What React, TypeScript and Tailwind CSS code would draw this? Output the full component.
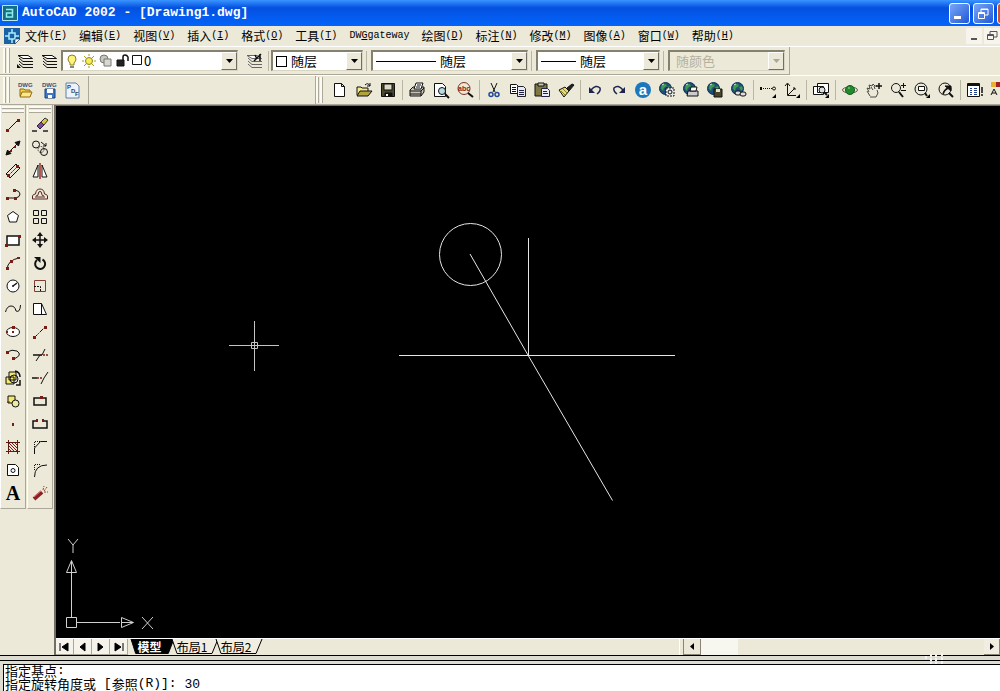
import { useState } from 'react'
import type { ReactNode } from 'react'
import clsx from 'clsx'

const CJK = "font-['Noto_Sans_CJK_SC',sans-serif]"
const MONO = "font-['Liberation_Mono',monospace]"

// ── Data ──────────────────────────────────────────────────────────────────────

const MENUS = [
  ['文件', 'F'],
  ['编辑', 'E'],
  ['视图', 'V'],
  ['插入', 'I'],
  ['格式', 'O'],
  ['工具', 'T'],
  ['DWGgateway', ''],
  ['绘图', 'D'],
  ['标注', 'N'],
  ['修改', 'M'],
  ['图像', 'A'],
  ['窗口', 'W'],
  ['帮助', 'H'],
]

type Tool = { name: string; icon: ReactNode }

// ── Shared icon parts ─────────────────────────────────────────────────────────

const globe = (
  <>
    <circle cx="6.5" cy="6.5" r="6" fill="#1b4d86" stroke="#12304f" />
    <path d="M2 4q3-3 5-2l1 2-3 2-1 3-2-2zM8 5l3-1 1 3-2 2z" fill="#3f9a52" stroke="#2a6b45" strokeWidth=".5" />
    <path d="M3 3l2-1" stroke="#cfe6f5" />
  </>
)
const dot = '#7a1c14'
const corner = <path d="M16 12v4h-4z" fill="#000" stroke="none" />

const drawTools: Tool[] = [
  { name: '直线', icon: <><path d="M3 13L13 3" /><path d="M1 12h3v3H1zM12 2h3v3h-3z" fill={dot} stroke="none" /></> },
  { name: '构造线', icon: <><path d="M2 14L14 2" /><path d="M1 15l1.500-5 3.500 3.500zM15 1l-5 1.500 3.500 3.500z" fill="#111" /><path d="M5 10h2v2H5zM9 6h2v2H9z" fill={dot} stroke="none" /></> },
  { name: '多线', icon: <><path d="M1 11L11 1l4 4L5 15z" /><path d="M4 12l8-8" strokeDasharray="2 1" /><path d="M2 11h3v3H2zM11 2h3v3h-3z" fill={dot} stroke="none" /></> },
  { name: '多段线', icon: <><path d="M2 12h9q4-1 4-4t-5-4" /><path d="M1 11h3v3H1zM9 11h3v3H9zM8 3h3v3H8z" fill={dot} stroke="none" /></> },
  { name: '正多边形', icon: <path d="M8 2.500l5.500 4-2 6.500h-7l-2-6.500z" fill="#fff" /> },
  { name: '矩形', icon: <><path d="M2 4h12v9H2z" fill="#fff" strokeWidth="1.500" /><path d="M0 12h3v3H0zM13 3h3v3h-3z" fill={dot} stroke="none" /></> },
  { name: '圆弧', icon: <><path d="M2 14q1-9 12-11" /><path d="M1 12h3v3H1zM5 5h3v3H5zM12 2h3v2h-3z" fill={dot} stroke="none" /></> },
  { name: '圆', icon: <><circle cx="8" cy="8" r="6" fill="#fff" /><path d="M8 8l4-3M7 8h2" strokeWidth="1.500" /></> },
  { name: '样条曲线', icon: <path d="M.5 11Q2 5 6 5t5 5q4 2 4.500-6" /> },
  { name: '椭圆', icon: <><ellipse cx="8" cy="8" rx="6.500" ry="4.500" fill="#fff" /><path d="M7 2h3v3H7zM1 7h2v2H1zM7 7h2v2H7z" fill={dot} stroke="none" /></> },
  { name: '椭圆弧', icon: <><path d="M2 5q5-3 10-1 6 4-3 8" /><path d="M1 4h3v3H1zM7 10h3v3H7z" fill={dot} stroke="none" /></> },
  { name: '插入块', icon: <><path d="M4 2h7v8H4zM1 7h8v7H1z" fill="#f1e873" /><circle cx="9" cy="9" r="4" /><path d="M10 1q5 1 5 6M15 10v5h-4" strokeWidth="1.500" /></> },
  { name: '创建块', icon: <><path d="M3 3h7v7H3z" fill="#f1e873" /><circle cx="10.500" cy="10.500" r="3.500" fill="#efeaa0" /><path d="M2 9h3" stroke={dot} /></> },
  { name: '点', icon: <path d="M7 7h2v3H7z" fill={dot} stroke="none" /> },
  { name: '图案填充', icon: <><path d="M3.500 1v14M12.500 1v14M1 3.500h14M1 12.500h14" stroke="#5b1b16" /><path d="M4 4l8 8M4 7l5 5M7 4l5 5M4 10l2 2M10 4l2 2" stroke={dot} /></> },
  { name: '面域', icon: <><path d="M2.500 2.500h8l3 3v8h-11z" fill="#fff" /><circle cx="8" cy="8.500" r="2" /></> },
  { name: '多行文字', icon: null },
]

const modifyTools: Tool[] = [
  { name: '删除', icon: <><path d="M0 14h16" stroke="#222" strokeDasharray="5 6" strokeWidth="1.500" /><path d="M5 9l4-4 3 3-4 4z" fill="#7c4b9b" stroke="#32203e" /><path d="M9 5l4-4 3 2-4 5z" fill="#d8c84a" stroke="#333" /></> },
  { name: '复制', icon: <><circle cx="4" cy="4.500" r="3.500" /><circle cx="12" cy="12" r="3.500" /><circle cx="9" cy="9.500" r="3" strokeDasharray="1 1" /><path d="M9 2l5 4M14 3v3h-3" /></> },
  { name: '镜像', icon: <><path d="M6 2v12H1zM10 2v12h5z" fill="#fff" /><path d="M8 0v16" stroke="#a32626" strokeWidth="1.500" /></> },
  { name: '偏移', icon: <><path d="M.5 13v-3q.5-2 3-2Q4 3 8 3t4.500 5q2.500 0 3 2v3z" stroke="#5a2622" /><path d="M3 11h10M4 10q2.500 0 2.500-3 0-1.500 1.500-1.500t1.500 1.500q0 3 2.500 3" stroke="#5a2622" /></> },
  { name: '阵列', icon: <path d="M1.500 1.500h5v5h-5zM9.500 1.500h5v5h-5zM1.500 9.500h5v5h-5zM9.500 9.500h5v5h-5z" /> },
  { name: '移动', icon: <><path d="M8 2v12M2 8h12" strokeWidth="1.500" /><path d="M8 0l3 4H5zM8 16l3-4H5zM0 8l4-3v6zM16 8l-4-3v6z" fill="#111" stroke="none" /></> },
  { name: '旋转', icon: <><path d="M10.500 4.500A5 5 0 1 1 5 5" strokeWidth="2" /><path d="M2 2h6.500v6z" fill="#111" stroke="none" /></> },
  { name: '缩放', icon: <><path d="M2.500 2.500h11v11h-11z" stroke="#823c34" /><path d="M2 8.500h6.500V14" strokeDasharray="2 1" /></> },
  { name: '拉伸', icon: <><path d="M1.500 2.500h8l5 11h-13z" fill="#fff" /><path d="M9.500 2.500v11" /></> },
  { name: '拉长', icon: <><path d="M2 14L14 2" strokeDasharray="5 1 1 1" /><path d="M1 12h3v3H1zM12 2h3v3h-3z" fill={dot} stroke="none" /></> },
  { name: '修剪', icon: <><path d="M1 8h7" strokeWidth="1.500" /><path d="M8 8h8" stroke={dot} strokeWidth="1.500" strokeDasharray="2 1" /><path d="M4 14l4-6h2l3-6" /></> },
  { name: '延伸', icon: <><path d="M0 8h5" strokeWidth="1.500" /><path d="M5 8h6" stroke={dot} strokeWidth="1.500" strokeDasharray="2 1" /><path d="M9 14l3-6 4-6" /></> },
  { name: '打断于点', icon: <><path d="M2 5h12v7H2z" strokeWidth="1.500" /><path d="M8 3h3v3H8z" fill={dot} stroke="none" /></> },
  { name: '打断', icon: <><path d="M5 5H1v7h14V5h-4" strokeWidth="1.500" /><path d="M4 3h2v3H4zM10 3h2v3h-2z" fill={dot} stroke="none" /></> },
  { name: '倒角', icon: <><path d="M2.500 15V9l6-6.500H15" /><path d="M2.500 8V2.500h6" strokeDasharray="1 1" /></> },
  { name: '圆角', icon: <><path d="M2.500 15q0-12 12.500-12" /><path d="M2.500 8V2.500h6" strokeDasharray="1 1" /></> },
  { name: '分解', icon: <><path d="M2 14l8-7" stroke="#8c1f22" strokeWidth="4" /><path d="M2 12l7-6" stroke="#d8797b" /><path d="M11 5l1-4M12 6l3-4M12 7h4" stroke="#8f4b2c" strokeDasharray="2 1" /></> },
]

const standardGroups: Tool[][] = [
  [
    { name: '新建', icon: <path d="M2.500 1.500h7l3 3v10h-10zM9.500 1.500v3h3" fill="#fff" /> },
    { name: '打开', icon: <><path d="M1 13V5h4l1 1h6v3" fill="#f5e98a" /><path d="M1 14l3-5h12l-4 5z" fill="#b0a43b" /><path d="M9 3q3-3 5 1M14 1v3h-3" /></> },
    { name: '保存', icon: <><path d="M1.500 1.500h13v13h-13z" fill="#48482e" /><path d="M4 2h8v6H4z" fill="#dcd9c4" /><path d="M5 11h7v3H5z" fill="#111" /><path d="M6 12h2v2H6z" fill="#fff" stroke="none" /></> },
  ],
  [
    { name: '打印', icon: <><path d="M1 8l3-3h11v5l-3 4H1z" fill="#c5c2b4" /><path d="M5 7l2-6h7l-2 6z" fill="#fff" /><path d="M8 3h4M7 5h4M1 9h11l3-3M1 12h11M12 9v5" /></> },
    { name: '打印预览', icon: <><path d="M1.500 1.500h8l3 3v10h-11z" fill="#fff" /><circle cx="9" cy="9" r="3.500" fill="#b7dbe5" /><path d="M12 12l4 4" strokeWidth="2" /></> },
    { name: '查找', icon: <><circle cx="7" cy="6.500" r="6" stroke="#733" /><text x="1" y="9" fontSize="7" fontWeight="700" fill="#8b1b1b" stroke="none" fontFamily="Liberation Sans">abc</text><path d="M11 11l5 4" strokeWidth="2" /></> },
  ],
  [
    { name: '剪切', icon: <><path d="M5 1l4 9M11 1L7 10" /><circle cx="5" cy="12.500" r="2" stroke="#234a9a" strokeWidth="1.500" /><circle cx="11" cy="12.500" r="2" stroke="#234a9a" strokeWidth="1.500" /></> },
    { name: '复制', icon: <><path d="M.5 2.500h6l2 2v7h-8z" fill="#fff" /><path d="M2 5.500h4M2 7.500h4M2 9.500h4" /><path d="M7.500 4.500h6l2 2v8h-8z" fill="#e8e8f2" stroke="#223" /><path d="M9 8.500h5M9 10.500h5M9 12.500h5" stroke="#224" /></> },
    { name: '粘贴', icon: <><path d="M1 2h12v12H1z" fill="#7f7840" /><path d="M4 1h6v3H4z" fill="#c8c6b8" /><path d="M7.500 6.500h6l2 2v6h-8z" fill="#e9edf5" stroke="#224" /><path d="M9 9.500h4M9 11.500h5" stroke="#224" /></> },
    { name: '特性匹配', icon: <><path d="M1 8l6-3 4 4-5 6z" fill="#e5db77" /><path d="M3 9l4 4M5 7l4 4" stroke="#8a7f2f" /><path d="M9 6l5-4 2 1-5 6z" fill="#222" /></> },
  ],
  [
    { name: '放弃', icon: <><path d="M4 8q5-6 9-2 1 3-3 6" stroke="#1d2450" strokeWidth="1.500" /><path d="M2 5v6h6z" fill="#1d2450" stroke="none" /></> },
    { name: '重做', icon: <><path d="M12 8Q7 2 3 6q-1 3 3 6" stroke="#1d2450" strokeWidth="1.500" /><path d="M14 5v6H8z" fill="#1d2450" stroke="none" /></> },
    { name: '今日', icon: <><circle cx="8" cy="8" r="8" fill="#1b78bd" stroke="none" /><text x="8" y="13" textAnchor="middle" fontSize="15" fontWeight="700" fill="#fff" stroke="none" fontFamily="Liberation Sans">a</text></> },
    { name: '网上发布', icon: <>{globe}<path d="M7 6h8v8H7z" fill="#e6e8ee" strokeDasharray="2 1" /><circle cx="11" cy="10" r="2" /></> },
    { name: '电子传递', icon: <>{globe}<path d="M5 9h10v5H4z" fill="#ccc" /><path d="M7 9l1-4h6l-1 4z" fill="#fff" /></> },
    { name: '保存到网上', icon: <>{globe}<path d="M7 7h8v8H7z" fill="#47452c" /><path d="M9 7h4v3H9z" fill="#e6e1c4" stroke="none" /></> },
    { name: '超级链接', icon: <>{globe}<rect x="4" y="9" width="6" height="4" rx="2" fill="#ddd" /><rect x="9" y="10" width="6" height="4" rx="2" fill="#ddd" /></> },
  ],
  [
    { name: '临时追踪点', icon: <><path d="M1 6.500h11" strokeDasharray="1 1" /><path d="M0 5h2v3H0z" fill="#111" stroke="none" /><circle cx="14" cy="6.500" r="1.500" />{corner}</> },
    { name: '用户坐标系', icon: <><path d="M3.500 2v11.500H12M4 13l7-7" /><path d="M1 4l2.500-3L6 4M9 6h2v2" />{corner}</> },
  ],
  [
    { name: '命名视图', icon: <><path d="M4.500 1.500h11v9h-11zM.5 4.500h10v8H.5z" fill="#fff" /><circle cx="9" cy="8" r="3" fill="#ddd" /><path d="M11 10l3 3" strokeWidth="2" />{corner}</> },
  ],
  [
    { name: '三维动态观察', icon: <><ellipse cx="8" cy="8" rx="7.500" ry="3" stroke="#5c5b52" /><circle cx="8" cy="8" r="4.500" fill="#238a2b" stroke="#145c1b" /><path d="M6 6h2" stroke="#9be39f" /></> },
    { name: '实时平移', icon: <><path d="M4 14l-3-5M3 10L1 6l3 1-1-4 3 1 1-2 2 2h2M5 5l2 3M8 4l1 3M11 8l1 3-2 4H4" stroke="#4a4a42" /><path d="M13 1v6M10 4h6" strokeWidth="1.500" /></> },
    { name: '实时缩放', icon: <><circle cx="6" cy="6" r="4.500" /><path d="M9 10l4 5" strokeWidth="2" /><path d="M11 3.500h5M13.500 1v5M11 8.500h5" /></> },
    { name: '窗口缩放', icon: <><circle cx="7" cy="7" r="6" /><path d="M4.500 4.500h6v4h-6z" fill="#fff" /><path d="M11 11l2 3" strokeWidth="2" />{corner}</> },
    { name: '缩放上一个', icon: <><circle cx="7" cy="7" r="6" /><path d="M11 11l4 4" strokeWidth="2" /><path d="M5 12q1-4 5-6" strokeWidth="1.500" /><path d="M7 4h6v5z" fill="#111" /></> },
  ],
  [
    { name: '设计中心', icon: <><path d="M.5 1.500h12v13H.5z" fill="#fff" /><path d="M.5 3h12" strokeWidth="2" /><path d="M3 6.500h2M3 8.500h2M3 10.500h2M3 12.500h2M7 6.500h3M7 8.500h3M7 10.500h3M7 12.500h3" stroke="#223e8a" /><path d="M15 5v6M14 13h2" strokeWidth="1.500" /></> },
    { name: '特性', icon: <><path d="M0 0h5v5H0z" fill="#e7b22e" stroke="none" /><path d="M5 0h5v5H5z" fill="#a12020" stroke="none" /><path d="M0 13l3-6 3 6M1 11h4" /></> },
  ],
]

const gatewayTools: Tool[] = [
  { name: '打开 DWG', icon: <><text x="1" y="5" fontSize="6" fill="#36517c" stroke="none" fontFamily="Liberation Sans" fontWeight="700">DWG</text><path d="M3 14V7h4l1 1h5v2" fill="#f6cf4b" stroke="#8d6a14" /><path d="M3 15l2-5h10l-2 5z" fill="#ffe888" stroke="#8d6a14" /></> },
  { name: '保存 DWG', icon: <><text x="1" y="5" fontSize="6" fill="#36517c" stroke="none" fontFamily="Liberation Sans" fontWeight="700">DWG</text><path d="M4 7h10v9H4z" fill="#3f78c8" stroke="#174177" /><path d="M6 7h6v4H6zM7 13h4v3H7z" fill="#fff" stroke="none" /></> },
  { name: '输出 PDF', icon: <><path d="M1 1h10l3 3v12H1z" fill="#eef3fb" stroke="#5f7fa8" /><text x="2" y="7" fontSize="6" fontWeight="700" fill="#345" stroke="none" fontFamily="Liberation Sans">P</text><text x="6" y="11" fontSize="6" fontWeight="700" fill="#345" stroke="none" fontFamily="Liberation Sans">D</text><text x="10" y="14" fontSize="6" fontWeight="700" fill="#345" stroke="none" fontFamily="Liberation Sans">F</text></> },
]

const layersIcon = (
  <>
    <path d="M2 11l4 3.500h10M2 8l4 3.500h10M2 5l4 3.500h10" />
    <path d="M1 2.500h10l4.500 3H6z" fill="#fff" />
  </>
)

// ── Building blocks ───────────────────────────────────────────────────────────

function Icon({ children }: { children: ReactNode }) {
  return (
    <svg className="h-4 w-4 shrink-0 overflow-visible" viewBox="0 0 16 16" fill="none" stroke="#111" strokeWidth={1} aria-hidden="true">
      {children}
    </svg>
  )
}

function ToolButton({ tool }: { tool: Tool }) {
  return (
    <button type="button" aria-label={tool.name} title={tool.name} className="flex h-[23px] w-6 shrink-0 items-center justify-center">
      {tool.icon ? <Icon>{tool.icon}</Icon> : <span className="font-['Liberation_Serif',serif] text-xl leading-none font-bold">A</span>}
    </button>
  )
}

function Grip() {
  return (
    <div className="flex h-full shrink-0 gap-px py-px">
      <span className="w-[3px] border-r border-[#aca899] bg-[#fbfaf3]" />
      <span className="w-[3px] border-r border-[#aca899] bg-[#fbfaf3]" />
    </div>
  )
}

function Divider({ wide }: { wide?: boolean }) {
  return <span className={clsx('h-5 w-px shrink-0 bg-[#bab6a4]', wide ? 'mr-1 ml-[3px]' : 'mx-0.5')} />
}

type ComboProps = {
  label: string
  value: string
  width: string
  pad: string
  disabled?: boolean
  children?: ReactNode
}

function Combo({ label, value, width, pad, disabled, children }: ComboProps) {
  return (
    <div className={clsx('grid h-[21px] shrink-0 border-t-2 border-l-2 border-r border-b border-t-[#85816f] border-l-[#85816f] border-r-[#d9d5c3] border-b-[#d9d5c3]', disabled ? 'bg-[#ece9d8]' : 'bg-white', width)}>
      <select
        aria-label={label}
        disabled={disabled}
        defaultValue={value}
        className={clsx('col-start-1 row-start-1 w-full appearance-none bg-transparent text-[13px] leading-[18px] outline-none', CJK, pad, disabled ? 'text-[#b5b19f] opacity-100' : 'text-black')}
      >
        <option>{value}</option>
      </select>
      <div className="pointer-events-none col-start-1 row-start-1 flex items-center">
        {children}
        <span className="ml-auto flex h-full w-4 items-center justify-center border-t border-l border-r border-b border-t-white border-l-white border-r-[#716f64] border-b-[#716f64] bg-[#ece9d8]">
          <svg className="h-1 w-[7px]" viewBox="0 0 7 4" aria-hidden="true">
            <path d="M0 0h7L3.500 4z" fill={disabled ? '#aca899' : '#000'} />
          </svg>
        </span>
      </div>
    </div>
  )
}

function ToolColumn({ tools, label }: { tools: Tool[]; label: string }) {
  return (
    <div role="toolbar" aria-label={label} className="flex w-[26px] flex-col items-center self-start border-r border-b border-[#aca899] border-l border-l-white pt-px pb-1">
      <div className="flex h-[7px] w-[22px] flex-col gap-px">
        <span className="h-[3px] border-b border-[#aca899] bg-[#fbfaf3]" />
        <span className="h-[3px] border-b border-[#aca899] bg-[#fbfaf3]" />
      </div>
      {tools.map(t => <ToolButton key={t.name} tool={t} />)}
    </div>
  )
}

// ── Bars ──────────────────────────────────────────────────────────────────────

function TitleBar() {
  return (
    <header className="flex h-[26px] shrink-0 items-center bg-linear-to-b from-[#3a94ff] via-[#0551e0] via-30% to-[#0364fa] pl-0.5 text-white">
      <svg className="h-4 w-4" viewBox="0 0 16 16" fill="none" aria-hidden="true">
        <path d="M.5.5h15v15H.5z" fill="#176e83" stroke="#b8e8ec" />
        <path d="M4 4.500h6.500V12H4.500V8h6" stroke="#8bf0ed" strokeWidth="1.500" />
      </svg>
      <h1 className={clsx('ml-1 text-[13px] font-bold whitespace-pre', MONO)}>AutoCAD 2002 - [Drawing1.dwg]</h1>
      <div className="-mr-[18px] ml-auto flex gap-[3px]">
        <button type="button" aria-label="最小化" className="h-[21px] w-[21px] rounded-[3px] border border-white bg-linear-to-br from-[#7ba6f5] to-[#2056d8]">
          <svg viewBox="0 0 19 19" aria-hidden="true"><path d="M4 12h7v3H4z" fill="#fff" /></svg>
        </button>
        <button type="button" aria-label="还原" className="h-[21px] w-[21px] rounded-[3px] border border-white bg-linear-to-br from-[#7ba6f5] to-[#2056d8]">
          <svg viewBox="0 0 19 19" fill="none" stroke="#fff" aria-hidden="true"><path d="M7 8V5h7v6h-3M7 5.500h7M4.500 8.500h6v6h-6zM4 9.500h7" /></svg>
        </button>
        <button type="button" aria-label="关闭" className="h-[21px] w-[21px] rounded-[3px] border border-white bg-[#d9512c]" />
      </div>
    </header>
  )
}

function MenuBar() {
  return (
    <nav className="flex h-5 shrink-0 items-center overflow-hidden pl-1">
      <svg className="h-4 w-4 shrink-0" viewBox="0 0 16 16" fill="none" aria-hidden="true">
        <path d="M0 0h16v11l-5 5H0z" fill="#1b62a5" />
        <path d="M5 5h6v6H5zM8 1v4M8 11v4M1 8h4M11 8h4" stroke="#a9ecff" strokeWidth="1.500" />
        <path d="M11 16v-5h5z" fill="#fff" stroke="#111" strokeWidth=".5" />
      </svg>
      <div className="ml-[5px] flex gap-3">
        {MENUS.map(([text, key]) => (
          <button key={text} type="button" className="flex items-center text-xs leading-5 whitespace-nowrap">
            {key ? (
              <>
                <span className={CJK}>{text}</span>
                <span className={clsx('text-[10px]', MONO)}>(<u>{key}</u>)</span>
              </>
            ) : (
              <span className={clsx('text-[10px]', MONO)}>DW<u>G</u>gateway</span>
            )}
          </button>
        ))}
      </div>
      <div className="ml-auto flex shrink-0 gap-0.5">
        <button type="button" aria-label="最小化图形" className="h-4 w-4 bg-[#f6f4ec]">
          <svg viewBox="0 0 16 16" aria-hidden="true"><path d="M5 10h6v2H5z" fill="#555" /></svg>
        </button>
        <button type="button" aria-label="还原图形" className="h-4 w-4 bg-[#f6f4ec]">
          <svg viewBox="0 0 16 16" fill="none" stroke="#555" aria-hidden="true"><path d="M6 6V3.500h7V9h-3M3.500 6.500h6v5h-6zM4 7.500h5" /></svg>
        </button>
      </div>
    </nav>
  )
}

function PropertiesBar() {
  return (
    <div className="flex h-[29px] shrink-0 border-t border-white">
      <div role="toolbar" aria-label="对象特性" className="flex items-center border-r border-b border-[#aca899] pr-1 pl-[3px]">
        <Grip />
        <div className="ml-[3px] flex">
          <ToolButton tool={{ name: '将对象的图层置为当前', icon: <>{layersIcon}<path d="M0 11l4 4H0z" fill="#111" stroke="none" /></> }} />
          <ToolButton tool={{ name: '图层', icon: layersIcon }} />
        </div>
        <Combo label="图层" value="0" width="w-[177px]" pad="pl-[81px]">
          <span className="flex gap-px pl-px">
            <Icon><path d="M8 2q4 0 4 4 0 2-2 4v2H6v-2Q4 8 4 6q0-4 4-4z" fill="#fbf37c" stroke="#8a8223" /><path d="M6 14h4" /></Icon>
            <Icon><circle cx="8" cy="8" r="3.500" fill="#f7ee55" stroke="#8f8416" /><path d="M3 3l2 2M13 3l-2 2M3 13l2-2M13 13l-2-2M8 1v2M8 13v2M1 8h2M13 8h2" stroke="#a89b19" /></Icon>
            <Icon><circle cx="6" cy="6" r="4" fill="#c9c7bd" stroke="#777" /><path d="M6 6h7v7H6z" fill="#d8d8d0" stroke="#777" /></Icon>
            <Icon><path d="M2 7h7v6H2z" fill="#222" /><path d="M8 7V4q0-2 2-2t3 2v4" strokeWidth="1.500" /></Icon>
            <Icon><path d="M.5 2.500h9v9H.5z" /></Icon>
          </span>
        </Combo>
        <div className="ml-1 flex items-center">
          <ToolButton tool={{ name: '上一个图层', icon: <g stroke="#666">{layersIcon}<path d="M8 8l7-7M14 8V1M9 2l2 4" stroke="#111" strokeWidth="1.500" /></g> }} />
          <Divider />
        </div>
        <Combo label="颜色" value="随层" width="w-[92px]" pad="pl-[18px]">
          <span className="ml-[3px] h-[11px] w-[11px] border border-black" />
        </Combo>
        <Divider wide />
        <Combo label="线型" value="随层" width="w-[157px]" pad="pl-[67px]">
          <span className="ml-[3px] h-px w-[60px] bg-black" />
        </Combo>
        <Divider wide />
        <Combo label="线宽" value="随层" width="w-[124px]" pad="pl-[42px]">
          <span className="ml-[3px] h-px w-[35px] bg-black" />
        </Combo>
        <Divider wide />
        <Combo label="打印样式" value="随颜色" width="w-[117px]" pad="pl-1.5" disabled />
      </div>
    </div>
  )
}

function StandardBar() {
  return (
    <div className="flex h-[29px] shrink-0 overflow-hidden border-t border-white">
      <div role="toolbar" aria-label="DWGgateway" className="flex w-[89px] shrink-0 items-center border-r border-[#aca899] pl-[3px]">
        <Grip />
        <div className="ml-[3px] flex">{gatewayTools.map(t => <ToolButton key={t.name} tool={t} />)}</div>
      </div>
      <div role="toolbar" aria-label="标准" className="ml-[226px] flex shrink-0 items-center border-l border-[#aca899]">
        <Grip />
        <div className="ml-[5px] flex items-center">
          {standardGroups.map((group, i) => (
            <div key={group[0].name} className="flex items-center">
              {i > 0 && <Divider />}
              {group.map(t => <ToolButton key={t.name} tool={t} />)}
            </div>
          ))}
        </div>
      </div>
    </div>
  )
}

// ── Drawing area ──────────────────────────────────────────────────────────────

function Drawing() {
  return (
    <div className="relative min-h-0 flex-1 overflow-hidden bg-black">
      <svg className="block h-full w-full" fill="none" stroke="#e6e6e6" aria-label="Drawing1.dwg">
        <circle cx="414.500" cy="148.500" r="31" />
        <path d="M414 148l58.500 102 84 144.500M343 249.500h276M472.500 132v118" />
        <path d="M173 239.500h50M198.500 215v50M195.500 236.500h6v6h-6z" stroke="#c4c4c4" />
      </svg>
      <svg className="absolute bottom-0 left-0 h-28 w-28" viewBox="0 0 112 112" fill="none" stroke="#d0d0d0" aria-label="UCS">
        <path d="M10.500 91.500h10v10h-10zM15.500 91V43M21 96.500h43" />
        <path d="M15.500 34.500l5 12h-10zM77.500 96.500l-12 -5v10zM15.500 35v11M77 96.500H66" />
        <path d="M12 13l5 6 5-6M17 19v8M86 91l11 12M97 91L86 103" />
      </svg>
    </div>
  )
}

const TABS = [
  { name: '模型', width: 'w-[41px]' },
  { name: '布局1', width: 'w-11' },
  { name: '布局2', width: 'w-11' },
]

const NAV = [
  { name: '第一个', d: 'M4 3v8M12 3v8L6 7z' },
  { name: '上一个', d: 'M11 3v8L6 7z' },
  { name: '下一个', d: 'M6 3v8l5-4z' },
  { name: '最后一个', d: 'M5 3v8l6-4zM13 3v8' },
]

function LayoutBar() {
  const [active, setActive] = useState('模型')

  return (
    <div className="flex h-[17px] shrink-0 border-t border-white">
      <div className="flex">
        {NAV.map(n => (
          <button key={n.name} type="button" aria-label={n.name} className="w-[18px] border-r border-b border-[#aca899] bg-[#f5f3ea]">
            <svg className="h-[14px] w-4" viewBox="0 0 16 14" fill="#000" stroke="#000" aria-hidden="true"><path d={n.d} /></svg>
          </button>
        ))}
      </div>
      <div role="tablist" className="ml-[3px] flex">
        {TABS.map(tab => (
          <button
            key={tab.name}
            type="button"
            role="tab"
            aria-selected={active === tab.name}
            onClick={() => setActive(tab.name)}
            className={clsx('relative h-[15px] pr-1 text-xs leading-[14px] whitespace-nowrap', CJK, tab.width, active === tab.name && 'font-bold text-white')}
          >
            <svg className="absolute inset-0 h-full w-full overflow-visible" viewBox="0 0 44 15" preserveAspectRatio="none" fill={active === tab.name ? '#000' : '#f1eee1'} stroke="#000" aria-hidden="true">
              <path d="M0 0l5 14.500h35L46 0" />
            </svg>
            <span className="relative">{tab.name}</span>
          </button>
        ))}
      </div>
      <div className="ml-auto flex w-[34%] border-l border-white pl-[3px]">
        <button type="button" aria-label="向左滚动" className="w-[18px] border-r border-b border-l border-[#8a8676] bg-[#ece9d8]">
          <svg className="mx-auto h-[13px] w-3" viewBox="0 0 12 13" aria-hidden="true"><path d="M8 3v7L4 6.500z" /></svg>
        </button>
        <div className="flex-1 bg-[#ece9d8]"><div className="h-full w-[37px] bg-[#f8f7ef]" /></div>
        <button type="button" aria-label="向右滚动" className="w-4 border-r border-b border-[#8a8676] bg-[#f1eee1]">
          <svg className="mx-auto h-[13px] w-3" viewBox="0 0 12 13" aria-hidden="true"><path d="M4 3v7l4-3.500z" /></svg>
        </button>
      </div>
    </div>
  )
}

function CommandLine() {
  const [value, setValue] = useState('30')

  return (
    <footer className="shrink-0 border-t border-black bg-[#dedbd0]">
      <div className="relative h-[5px] border-b border-black">
        <svg className="absolute -top-1 right-14 h-3 w-5" viewBox="0 0 20 12" stroke="#f4f4f4" strokeWidth="2" strokeDasharray="3 1" aria-hidden="true">
          <path d="M2 4v3M7 2v10M12 2v10M18 1v11" />
        </svg>
      </div>
      <div className="h-[3px]" />
      <div className="ml-[3px] h-[27px] border-t border-l border-black bg-white pl-px text-[13px] leading-3">
        <p className="flex h-[13px] items-start whitespace-pre">
          <span className={CJK}>指定基点</span>
          <span className={MONO}>:</span>
        </p>
        <div className="flex h-[13px] items-start whitespace-pre">
          <label htmlFor="command" className="flex items-start">
            <span className={CJK}>指定旋转角度或</span>
            <span className={MONO}> [</span>
            <span className={CJK}>参照</span>
            <span className={MONO}>(R)]: </span>
          </label>
          <input
            id="command"
            value={value}
            onChange={e => setValue(e.target.value)}
            className={clsx('h-3 min-w-0 flex-1 bg-transparent leading-3 outline-none', MONO)}
          />
        </div>
      </div>
    </footer>
  )
}

export default function App() {
  return (
    <div className="flex h-screen flex-col overflow-hidden bg-[#ece9d8] text-black">
      <TitleBar />
      <MenuBar />
      <PropertiesBar />
      <StandardBar />
      <div className="flex min-h-0 flex-1 border-t border-[#aca899]">
        <aside className="flex w-[54px] shrink-0 gap-px">
          <ToolColumn label="绘图" tools={drawTools} />
          <ToolColumn label="修改" tools={modifyTools} />
        </aside>
        <main className="flex min-w-0 flex-1 flex-col border-t border-l-2 border-[#716f64]">
          <Drawing />
          <LayoutBar />
        </main>
      </div>
      <CommandLine />
    </div>
  )
}
